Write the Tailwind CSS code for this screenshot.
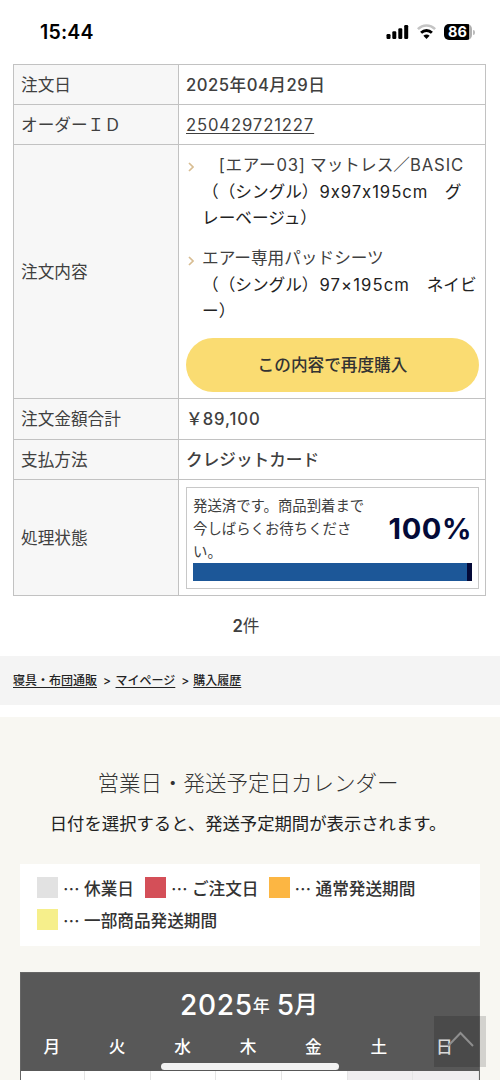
<!DOCTYPE html>
<html lang="ja">
<head>
<meta charset="utf-8">
<title>購入履歴</title>
<script src="https://cdn.jsdelivr.net/npm/@tailwindcss/browser@4"></script>
</head>
<body class="relative h-[1080px] w-[500px] overflow-hidden bg-white font-[Inter,'Noto_Sans_CJK_JP',sans-serif] text-[16.65px] text-[#404040] whitespace-nowrap [font-feature-settings:'calt'_0] [text-spacing-trim:space-all]">
<header class="flex h-[64px] items-center justify-between pl-[40px] pr-[25px] text-black">
  <div class="text-[19.5px] font-semibold leading-[24px] tracking-[0.2px]">15:44</div>
  <div class="flex items-center gap-[8px]">
    <svg width="23" height="16" viewBox="0 0 23 16"><g fill="#000"><rect x="0.5" y="10" width="4" height="5" rx="1.2"/><rect x="6.3" y="7.3" width="4" height="7.7" rx="1.2"/><rect x="12.3" y="4.2" width="4" height="10.8" rx="1.2"/><rect x="18.2" y="1" width="4" height="14" rx="1.2"/></g></svg>
    <svg width="19" height="16" viewBox="0 0 19 16" fill="none"><path d="M0.9 5.2C5.8 .2 13.2 .2 18.1 5.2" stroke="#c4c4c4" stroke-width="2.6"/><path d="M4.1 8.8C7.2 5.7 11.8 5.7 14.9 8.8" stroke="#000" stroke-width="2.8"/><path d="M6.4 11.7C8.1 10 10.9 10 12.6 11.7L9.5 15Z" fill="#000"/></svg>
    <div class="flex items-center gap-[1px]">
      <div class="flex h-[16px] w-[28px] items-center justify-center rounded-[5px] bg-[linear-gradient(90deg,#000_88%,#b0b0b0_88%)] pr-px text-[14.5px] font-bold leading-none text-white">86</div>
      <div class="h-[5px] w-[2px] rounded-r-full bg-[#bbb]"></div>
    </div>
  </div>
</header>

<main>
  <div class="ml-[13px] grid w-[473px] grid-cols-[165px_1fr] grid-rows-[40px_40px_254px_41px_40px_116px] border-t border-l border-[#c2c2c2] *:flex *:items-center *:border-r *:border-b *:border-[#c2c2c2] *:pt-px *:pl-[7px]">
    <div class="bg-[#f7f7f7]">注文日</div>
    <div class="font-medium tracking-[0.5px]">2025年04月29日</div>
    <div class="bg-[#f7f7f7]">オーダーＩＤ</div>
    <div><a class="tracking-[0.87px] underline underline-offset-[2px]">250429721227</a></div>
    <div class="bg-[#f7f7f7]">注文内容</div>
    <div>
      <div class="flex w-[293px] flex-col leading-[26.7px]">
        <div class="flex">
          <svg class="mt-[10px] mr-[8px] shrink-0" width="8" height="10" viewBox="0 0 8 10" fill="none" stroke="#d8bd92" stroke-width="1.7"><path d="M3 1L7 5L3 9"/></svg>
          <div><a>　<span class="tracking-[0.7px]">[エアー03]</span> マットレス／<span class="tracking-[0.9px]">BASIC</span></a><br><span class="text-[#222]">（（シングル）<span class="ml-px tracking-[0.95px]">9x97x195cm</span>　グ<br>レーベージュ）</span></div>
        </div>
        <div class="mt-[13px] flex">
          <svg class="mt-[11px] mr-[8px] shrink-0" width="8" height="10" viewBox="0 0 8 10" fill="none" stroke="#d8bd92" stroke-width="1.7"><path d="M3 1L7 5L3 9"/></svg>
          <div><a>エアー専用パッドシーツ</a><br><span class="text-[#222]">（（シングル）<span class="ml-px tracking-[1.1px]">97×195cm</span>　ネイビ<br>ー）</span></div>
        </div>
        <button class="mt-[13px] h-[54px] rounded-full bg-[#fadc72] font-medium text-[#333]">この内容で再度購入</button>
      </div>
    </div>
    <div class="bg-[#f7f7f7]">注文金額合計</div>
    <div class="font-medium">￥<span class="tracking-[0.9px]">89,100</span></div>
    <div class="bg-[#f7f7f7]">支払方法</div>
    <div class="font-medium">クレジットカード</div>
    <div class="bg-[#f7f7f7]">処理状態</div>
    <div>
      <div class="h-[102px] w-[293px] border border-[#c8c8c8] px-[6px] pt-[6px]">
        <div class="flex h-[69px] items-center justify-between">
          <p class="text-[14.4px] leading-[23px]">発送済です。商品到着まで<br>今しばらくお待ちくださ<br>い。</p>
          <strong class="pt-px text-[29px] font-bold tracking-[0.6px] text-[#040a38]">100%</strong>
        </div>
        <div class="h-[18px] w-[279px] border-r-[5px] border-[#040a38] bg-[#1c5798]"></div>
      </div>
    </div>
  </div>
  <p class="flex h-[60px] items-center justify-center pr-[8px]"><b class="font-semibold">2</b>件</p>
  <nav class="flex h-[49px] items-center bg-[#f4f4f4] pl-[13px] text-[12px] font-medium text-[#222]">
    <a class="underline underline-offset-[2px]">寝具・布団通販</a><span class="mr-[4.5px] ml-[6px]">&gt;</span><a class="underline underline-offset-[2px]">マイページ</a><span class="mr-[4px] ml-[6px]">&gt;</span><a class="underline underline-offset-[2px]">購入履歴</a>
  </nav>
</main>

<section class="mt-[12px] flex h-[363px] flex-col items-center bg-[#f8f7f2] pt-[50px]">
  <h2 class="pr-[4px] text-[21.5px] font-light leading-[32px] text-[#333]">営業日・発送予定日カレンダー</h2>
  <p class="mt-[12px] pr-[4px] text-[17.35px] leading-[26px] text-[#222]">日付を選択すると、発送予定期間が表示されます。</p>
  <div class="mt-[27px] flex h-[82px] w-[460px] flex-col gap-[11px] bg-white pt-[13px] pl-[17px] font-medium text-[#333]">
    <div class="flex h-[21px] items-center">
      <i class="mr-[5px] size-[21px] bg-[#e2e2e2]"></i><span class="w-[21px] pt-[3px] font-['Noto_Sans_CJK_JP']">…</span><span class="pt-[3px]">休業日</span>
      <i class="mr-[5px] ml-[11px] size-[21px] bg-[#d44f58]"></i><span class="w-[21px] pt-[3px] font-['Noto_Sans_CJK_JP']">…</span><span class="pt-[3px]">ご注文日</span>
      <i class="mr-[5px] ml-[10px] size-[21px] bg-[#fcb643]"></i><span class="w-[21px] pt-[3px] font-['Noto_Sans_CJK_JP']">…</span><span class="pt-[3px]">通常発送期間</span>
    </div>
    <div class="flex h-[21px] items-center"><i class="mr-[5px] size-[21px] bg-[#f6ef8b]"></i><span class="w-[21px] pt-[3px] font-['Noto_Sans_CJK_JP']">…</span><span class="pt-[3px]">一部商品発送期間</span></div>
  </div>
  <div class="mt-[26px] h-[108px] w-[460px] border border-b-0 border-[#666] bg-[#585858] text-white">
    <div class="flex h-[64px] items-center justify-center pr-[2px] text-[28px] font-medium"><span class="tracking-[0.7px]">2025</span><span class="mt-[4px] mr-[7px] text-[17px]">年</span>5<span class="text-[24px]">月</span></div>
    <div class="grid h-[34px] grid-cols-7 items-start text-center font-medium leading-[20px] *:pr-[4px]"><span>月</span><span>火</span><span>水</span><span>木</span><span>金</span><span>土</span><span>日</span></div>
    <div class="grid h-[9px] grid-cols-[64px_repeat(6,1fr)] bg-white *:border-r *:border-[#e5e5e5]"><i></i><i></i><i></i><i></i><i></i><i class="bg-[#f0eef0]"></i><i class="bg-[#f0eef0]"></i></div>
  </div>
</section>

<div class="absolute top-[1016px] left-[434px] h-[51px] w-[52px] bg-black/15">
  <svg width="52" height="51" viewBox="0 0 52 51" fill="none" stroke="#8e8e8e" stroke-width="2"><path d="M14 30L26.5 17L39 30"/></svg>
</div>
<div class="absolute top-[1063px] left-[161px] h-[7px] w-[178px] rounded-full bg-[#f2f2f2]"></div>
</body>
</html>
